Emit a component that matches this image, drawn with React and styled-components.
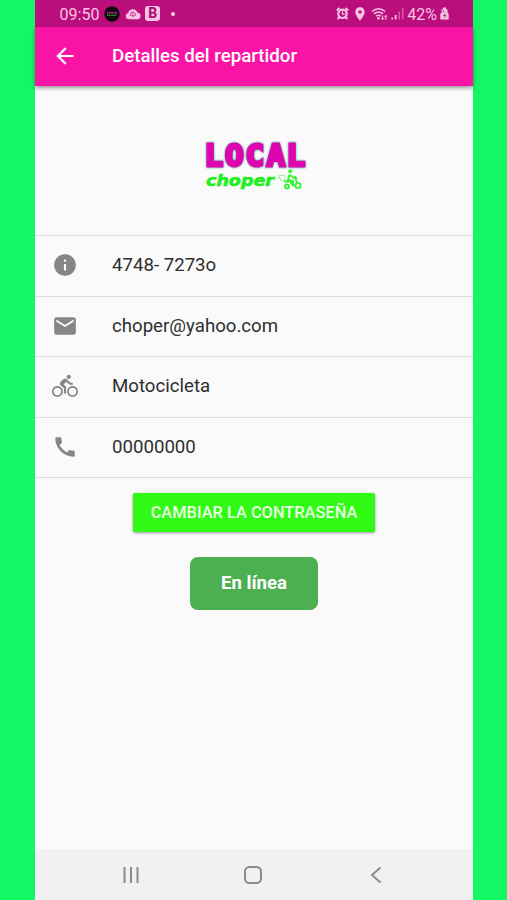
import React from 'react';
import styled, { createGlobalStyle } from 'styled-components';
import {
    MdArrowBack,
    MdInfo,
    MdEmail,
    MdDirectionsBike,
    MdCall,
    MdLocationOn,
} from 'react-icons/md';

const GlobalStyle = createGlobalStyle`
    * {
        box-sizing: border-box;
    }
    body {
        margin: 0;
        background: #14f765;
        font-family: Roboto, sans-serif;
    }
`;

const Screen = styled.div`
    display: flex;
    flex-direction: column;
    width: 438px;
    height: 900px;
    margin-left: 35px;
    background: #fafafa;
`;

const StatusBar = styled.div`
    display: flex;
    align-items: center;
    justify-content: space-between;
    height: 27px;
    padding: 0 24px 0 24.6px;
    background: #b90e7c;
    color: #f8c3e4;
`;

const StatusGroup = styled.div`
    display: flex;
    align-items: center;
    gap: ${({ $gap }) => $gap}px;
`;

const StatusText = styled.span`
    padding-top: 2px;
    font-size: 16px;
    line-height: 20px;
`;

const AppBar = styled.header`
    display: flex;
    align-items: center;
    flex: none;
    height: 59px;
    padding: 0 0 2px 17px;
    background: #f914a5;
    color: #fff;
    box-shadow: 0 2px 4px rgba(0, 0, 0, 0.4);
    z-index: 1;
`;

const Title = styled.h1`
    margin: 0 0 0 34px;
    font-size: 18.7px;
    font-weight: 500;
`;

const LogoSection = styled.div`
    display: flex;
    align-items: center;
    justify-content: center;
    flex: none;
    height: 149px;
    padding: 10px 0 0 3px;
`;

const Details = styled.ul`
    flex: none;
    margin: 0;
    padding: 0;
    list-style: none;
    border-top: 1px solid #dcdcdc;
`;

const DetailItem = styled.li`
    display: flex;
    align-items: center;
    height: 60.6px;
    padding: 0 0 1px 17px;
    border-bottom: 1px solid #dcdcdc;
    color: #868686;
`;

const DetailText = styled.span`
    margin-left: 34px;
    font-size: 18.65px;
    line-height: 24px;
    color: #2f2f2f;
`;

const Actions = styled.div`
    display: flex;
    flex: 1;
    flex-direction: column;
    align-items: center;
    gap: 25px;
    padding-top: 14.6px;
`;

const PasswordButton = styled.button`
    width: 242px;
    height: 39px;
    padding: 0;
    border: 0;
    border-radius: 2px;
    background: #31fb14;
    color: #e8fee4;
    font-family: inherit;
    font-size: 16.4px;
    font-weight: 500;
    white-space: nowrap;
    text-transform: uppercase;
    box-shadow: 0 1px 3px rgba(0, 0, 0, 0.4);
`;

const OnlineButton = styled.button`
    width: 128px;
    height: 53px;
    padding: 0;
    border: 0;
    border-radius: 8px;
    background: #4caf50;
    color: #fff;
    font-family: inherit;
    font-size: 18.6px;
    font-weight: 700;
`;

const NavBar = styled.nav`
    display: flex;
    align-items: center;
    justify-content: space-between;
    flex: none;
    height: 51px;
    padding: 0 86px 0 84.5px;
    background: #f1f1f1;
`;

const AppBadge = () => (
    <svg width="16" height="16" viewBox="0 0 16 16">
        <circle cx="8" cy="8" r="7.7" fill="#10080d" />
        <path d="M3 6.8h10" stroke="#a32483" strokeWidth="2" strokeDasharray="1.6 .5" />
        <path d="M3 9.3h9.5" stroke="#23913a" strokeWidth="1.4" strokeDasharray="1.3 .4" />
    </svg>
);

const CloudIcon = () => (
    <svg width="16" height="12" viewBox="0 0 16 12">
        <path
            d="M4 11.2a3.2 3.2 0 0 1-.8-6.3A4.8 4.8 0 0 1 12.5 4.8 3.2 3.2 0 0 1 12.3 11.2z"
            fill="currentColor"
        />
        <path
            d="M5.4 8V6.6a2.4 2.4 0 0 1 4.9 0V8M7.8 5.6v2.8M6.6 7.2l1.2 1.4L9 7.2"
            fill="none"
            stroke="#b90e7c"
            strokeWidth=".8"
        />
    </svg>
);

const LetterBadge = styled.span`
    display: flex;
    align-items: center;
    justify-content: center;
    width: 15px;
    height: 15px;
    border-radius: 3px;
    background: #f8c3e4;
    color: #a80b70;
    font-size: 14px;
    font-weight: 700;
    line-height: 15px;
`;

const Dot = styled.i`
    width: 4px;
    height: 4px;
    margin-left: 6px;
    border-radius: 50%;
    background: #f8d5ea;
`;

const AlarmIcon = () => (
    <svg width="13" height="13" viewBox="0 0 13 13" fill="none" stroke="currentColor">
        <circle cx="6.5" cy="6.8" r="4.2" strokeWidth="2.2" />
        <path d="M6.5 4.3v2.9h2.2" strokeWidth="1.2" />
        <path d="M.8 3.4 3.5 1M12.2 3.4 9.5 1M3.2 10.2l-1.5 2M9.8 10.2l1.5 2" strokeWidth="2" />
    </svg>
);

const WifiIcon = () => (
    <svg width="17" height="14" viewBox="0 0 17 14" fill="none" stroke="currentColor">
        <path d="M.8 4.5Q7.5-1.2 14.2 4.5M2.9 6.9q4.6-3.8 9.2 0M5 9.2q2.5-2 5 0" strokeWidth="1.4" />
        <circle cx="7.5" cy="11.2" r="1.3" fill="currentColor" stroke="none" />
        <path d="M11.6 8.5v4M10.3 11.2l1.3 1.5 1.3-1.5M14.8 13V8.5M13.5 9.9l1.3-1.5 1.3 1.5" />
    </svg>
);

const SignalIcon = () => (
    <svg width="13" height="13" viewBox="0 0 13 13" stroke="currentColor" strokeWidth="1.7">
        <path d="M1.2 10.5v2M4.6 8v4.5" />
        <path d="M8.2 4.5v8M11.7 .8v11.7" opacity=".4" />
    </svg>
);

const BatteryIcon = () => (
    <svg width="9" height="13" viewBox="0 0 9 13">
        <path d="M3 .5h3v1.7h1.5v3.3L8.7 7v5.5H.3V7l1.2-1.5V2.2H3z" fill="currentColor" />
        <path d="M2.4 3.2h1.8v2.2H2.4z" fill="#b9719f" />
        <path d="M5.6 5.6 3.2 9h1.7l-.7 2.7L6.4 8.2H4.9z" fill="#693052" />
    </svg>
);

const LogoSvg = styled.svg`
    overflow: visible;
`;

const BrandText = styled.text`
    fill: #df05ae;
    stroke: #df05ae;
    stroke-width: 3px;
    font-family: 'DejaVu Sans Mono', monospace;
    font-size: 31px;
    font-weight: 700;
    filter: drop-shadow(0 0 0.8px #2d9c8e);
`;

const BrandSubText = styled.text`
    fill: #20ee20;
    stroke: #20ee20;
    stroke-width: 0.6px;
    font-family: 'DejaVu Sans', sans-serif;
    font-size: 16px;
    font-style: italic;
    font-weight: 700;
`;

const Logo = () => (
    <LogoSvg width="104" height="56" viewBox="0 0 104 56">
        <BrandText x="0.5 21 41.5 62.5 82.5" y="28">
            LOCAL
        </BrandText>
        <BrandSubText x="2" y="48" textLength="68" lengthAdjust="spacingAndGlyphs">
            choper
        </BrandSubText>
        {/* delivery rider */}
        <g fill="none" stroke="#3df23d" strokeWidth="2">
            <circle cx="86.2" cy="33.3" r="2" fill="#3df23d" stroke="none" />
            <path d="M85.5 36.5 84 42l5 1v5M86 37l4 3h3M91 38l2.5 8M80 43.5h6l3 4h3" />
            <circle cx="83" cy="48.5" r="2" />
            <circle cx="94" cy="47.5" r="2.6" />
            <path d="M75 37.5h6v5h-4zM74 39l3 3" strokeWidth="1" opacity=".5" />
        </g>
    </LogoSvg>
);

const details = [
    { id: 'code', icon: MdInfo, text: '4748- 7273o' },
    { id: 'email', icon: MdEmail, text: 'choper@yahoo.com' },
    { id: 'vehicle', icon: MdDirectionsBike, text: 'Motocicleta' },
    { id: 'phone', icon: MdCall, text: '00000000' },
];

const App = () => (
    <>
        <GlobalStyle />
        <Screen>
            <StatusBar>
                <StatusGroup $gap={4.6}>
                    <StatusText>09:50</StatusText>
                    <AppBadge />
                    <CloudIcon />
                    <LetterBadge>B</LetterBadge>
                    <Dot />
                </StatusGroup>
                <StatusGroup $gap={3}>
                    <AlarmIcon />
                    <MdLocationOn size={16} />
                    <WifiIcon />
                    <SignalIcon />
                    <StatusText>42%</StatusText>
                    <BatteryIcon />
                </StatusGroup>
            </StatusBar>

            <AppBar>
                <MdArrowBack size={26} />
                <Title>Detalles del repartidor</Title>
            </AppBar>

            <LogoSection>
                <Logo />
            </LogoSection>

            <Details>
                {details.map(({ id, icon: Icon, text }) => (
                    <DetailItem key={id}>
                        <Icon size={26} />
                        <DetailText>{text}</DetailText>
                    </DetailItem>
                ))}
            </Details>

            <Actions>
                <PasswordButton>Cambiar la contraseña</PasswordButton>
                <OnlineButton>En línea</OnlineButton>
            </Actions>

            <NavBar>
                <svg width="22" height="22" viewBox="0 0 22 22" stroke="#8b8b8b" strokeWidth="2">
                    <path d="M4.5 3v16M11 3v16M17.5 3v16" />
                </svg>
                <svg width="22" height="22" viewBox="0 0 22 22" fill="none" stroke="#8b8b8b" strokeWidth="2">
                    <rect x="3" y="3" width="16" height="16" rx="4.5" />
                </svg>
                <svg width="22" height="22" viewBox="0 0 22 22" fill="none" stroke="#8b8b8b" strokeWidth="2">
                    <path d="m15.5 3.5-8.5 7.5 8.5 7.5" />
                </svg>
            </NavBar>
        </Screen>
    </>
);

export default App;
